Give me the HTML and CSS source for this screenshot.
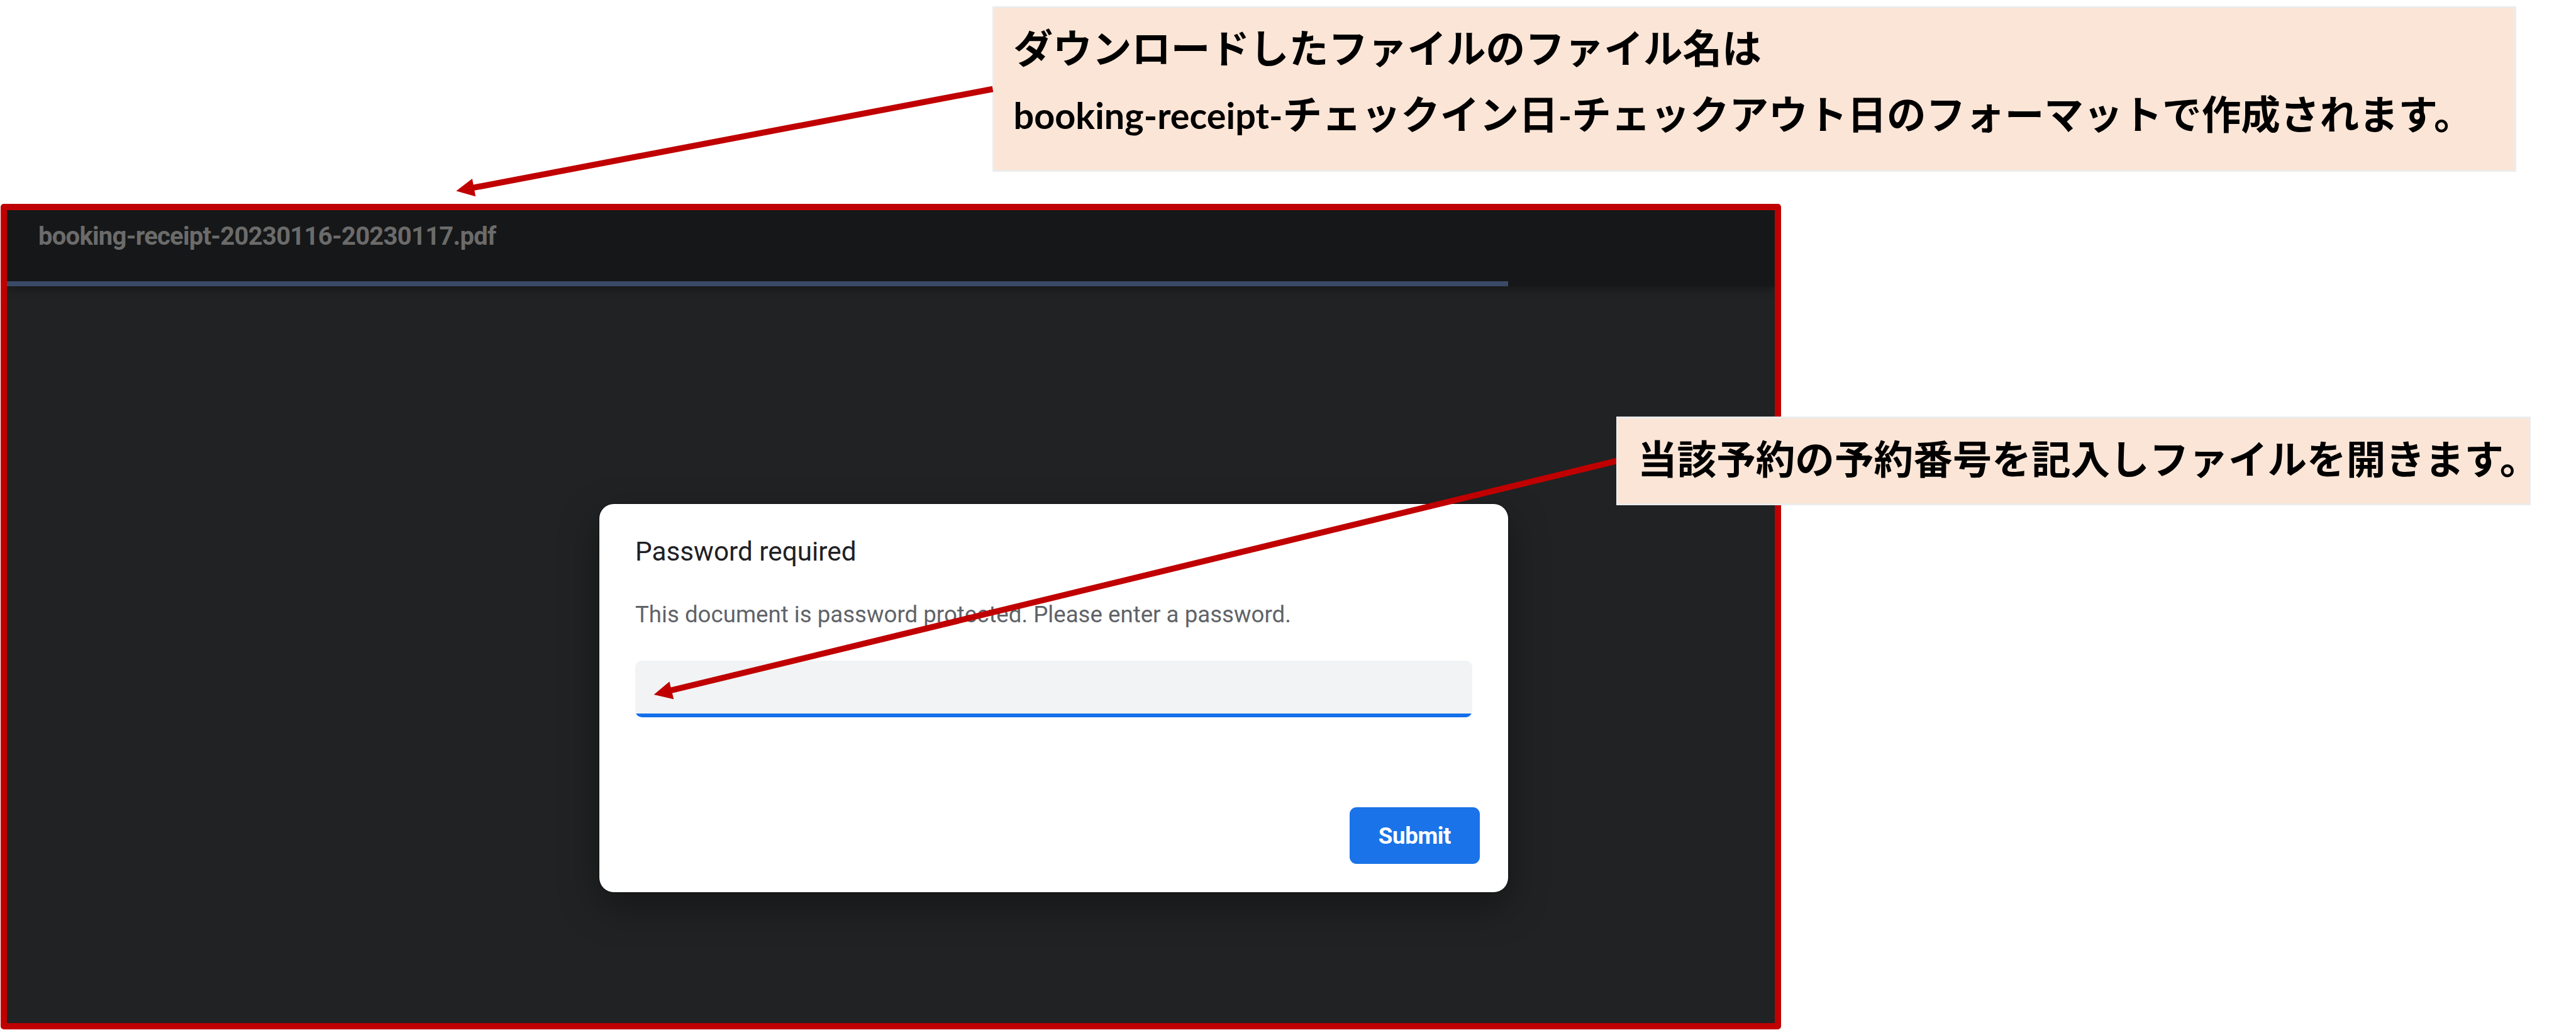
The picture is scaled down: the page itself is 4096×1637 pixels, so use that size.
FILE: index.html
```html
<!DOCTYPE html>
<html lang="ja">
  <head>
    <meta charset="UTF-8" />
    <meta name="viewport" content="width=device-width, initial-scale=1.0" />
    <title>booking-receipt-20230116-20230117.pdf</title>
    <link rel="stylesheet" href="styles.css">
  </head>
  <body>
    <div class="note note-filename">
      <p>ダウンロードしたファイルのファイル名は</p>
      <p><span class="latin">booking-receipt-</span>チェックイン日<span class="latin">-</span>チェックアウト日のフォーマットで作成されます。</p>
    </div>
    <div class="viewer">
      <div class="toolbar">
        <span class="file-name">booking-receipt-20230116-20230117.pdf</span>
        <div class="progress"></div>
      </div>
      <div class="dialog">
        <h1 class="dialog-title">Password required</h1>
        <p class="dialog-message">This document is password protected. Please enter a password.</p>
        <input type="password" class="password" autocomplete="off" />
        <button class="submit">Submit</button>
      </div>
    </div>
    <svg class="arrows" viewBox="0 0 4200 1679">
      <line x1="1618.5" y1="145.1" x2="768" y2="306.6" />
      <polygon points="743.4,311.3 775.1,320.3 769.6,291.3" />
      <line x1="2640" y1="750.4" x2="1090" y2="1126.4" />
      <polygon points="1065.8,1132.3 1098.2,1139.7 1091.2,1111" />
    </svg>
    <div class="note note-password">
      <p>当該予約の予約番号を記入しファイルを開きます。</p>
    </div>
  </body>
</html>
```

FILE: styles.css
```css
* {
  box-sizing: border-box;
}
body {
  position: relative;
  display: flow-root;
  height: 1637px;
  margin: 0;
  overflow: hidden;
  background-color: #ffffff;
  font-family: Roboto, sans-serif;
}
p,
h1 {
  margin: 0;
}
.note {
  border: 3px solid #ececec;
  background-color: #fbe5d6;
  color: #000000;
  font-family: "Noto Sans CJK JP", sans-serif;
  font-size: 62.6px;
  font-weight: 700;
  line-height: 104.7px;
  white-space: nowrap;
}
.note-filename {
  width: 2423px;
  height: 263px;
  margin: 10px 0 0 1577.5px;
  padding: 8px 0 0 31px;
}
.note-password {
  position: absolute;
  top: 662px;
  left: 2570px;
  width: 1454px;
  height: 141px;
  padding: 9px 0 0 31px;
}
.latin {
  font-family: Lato, sans-serif;
  font-size: 57.5px;
  letter-spacing: 0.05px;
  line-height: 1;
}
.viewer {
  width: 2831px;
  height: 1312px;
  margin: 51px 0 0 1px;
  border: 10px solid #c00000;
  border-radius: 5px;
  background-color: #212223;
}
.toolbar {
  display: flex;
  flex-direction: column;
  justify-content: space-between;
  height: 121px;
  padding-top: 11px;
  background-color: #161718;
  box-shadow: 0 4px 14px rgba(0, 0, 0, 0.35);
  clip-path: inset(0 0 -30px 0);
}
.file-name {
  padding-left: 50px;
  color: #6b6b6b;
  font-size: 40px;
  font-weight: 700;
  letter-spacing: -0.75px;
  line-height: 61px;
}
.progress {
  width: 2387px;
  height: 8px;
  background-color: #394a66;
}
.dialog {
  display: flex;
  flex-direction: column;
  width: 1445px;
  height: 617px;
  margin: 346px 0 0 942px;
  padding: 44px 57px 0;
  border-radius: 23px;
  background-color: #ffffff;
  box-shadow: 0 0 3px rgba(0, 0, 0, 0.6), 0 22px 62px rgba(0, 0, 0, 0.36);
}
.dialog-title {
  color: #202124;
  font-size: 42.3px;
  font-weight: 400;
  line-height: 64px;
}
.dialog-message {
  margin-top: 40px;
  color: #5f6368;
  font-size: 36.65px;
  line-height: 56px;
}
.password {
  width: 100%;
  height: 90px;
  margin-top: 45px;
  padding: 0 22px;
  border: none;
  border-radius: 11px;
  outline: none;
  background: linear-gradient(#126fea, #126fea) bottom / 100% 6px no-repeat #f1f3f4;
  font-size: 36.7px;
}
.submit {
  align-self: flex-end;
  width: 207px;
  height: 90px;
  margin: 143px -12px 0 0;
  padding: 0;
  border: none;
  border-radius: 11px;
  background-color: #1a73e8;
  color: #ffffff;
  font-family: inherit;
  font-size: 36.7px;
  font-weight: 700;
  letter-spacing: -0.4px;
}
.arrows {
  position: absolute;
  top: 0;
  left: 0;
  width: 4096px;
  height: 1637px;
  fill: #c00000;
}
.arrows line {
  stroke: #c00000;
  stroke-width: 9.8;
}
```
